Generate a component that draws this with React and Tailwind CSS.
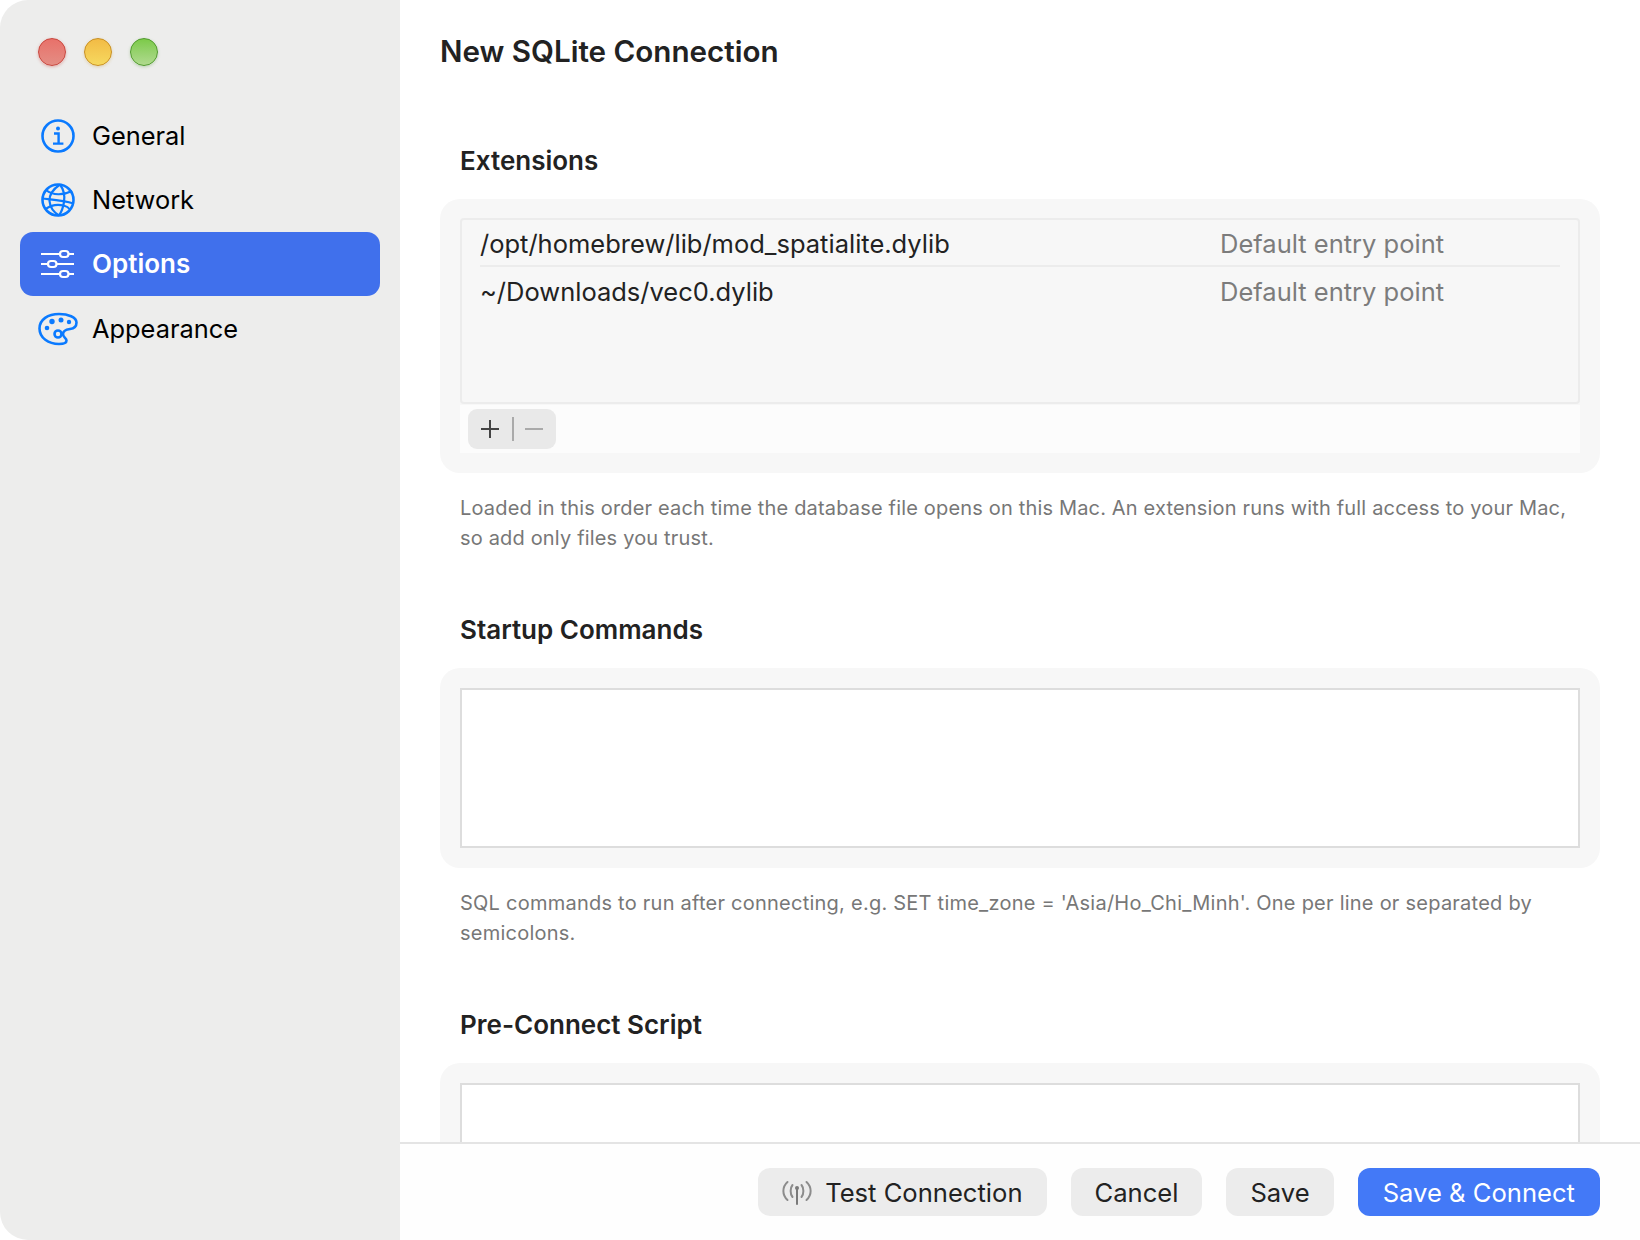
const InfoIcon = () => (
  <svg width="36" height="36" viewBox="0 0 36 36" fill="none" stroke="#0a7aff">
    <circle cx="18" cy="18" r="15.5" strokeWidth="2.6" />
    <circle cx="18" cy="10.600" r="2" fill="#0a7aff" stroke="none" />
    <path d="M14 15.500h4.600v10M13 25.600h10.400" strokeWidth="2.400" />
  </svg>
);

const GlobeIcon = () => (
  <svg width="36" height="36" viewBox="0 0 36 36" fill="none" stroke="#0a7aff" strokeWidth="2.200">
    <circle cx="18" cy="18" r="15.500" strokeWidth="2.600" />
    <path d="M20 2.500C12 8 9 13 9.500 19c.5 6 4 11 9.500 14.500" />
    <path d="M20 2.500C24 8 25 14 24 20c-.8 5-2.500 10-5 13.500" />
    <path d="M6 8c7 5.500 17 5.500 26 1" />
    <path d="M2.500 16.500c9 1 21 1.500 31 5" />
    <path d="M5.500 27c5-3.500 12-5 18-3.500c3 .7 5 1.800 6.500 4" />
  </svg>
);

const SlidersIcon = () => (
  <svg width="36" height="36" viewBox="0 0 36 36" fill="none" stroke="#fff" strokeWidth="2.200">
    <path d="M1 8h19M28.500 8h5.500M1 18h7M16.500 18h17.500M1 28h19M28.500 28h5.500" />
    <rect x="20" y="5" width="8.500" height="6" rx="3" />
    <rect x="8" y="15" width="8.500" height="6" rx="3" />
    <rect x="20" y="25" width="8.500" height="6" rx="3" />
  </svg>
);

const PaletteIcon = () => (
  <svg width="40" height="34" viewBox="0 0 40 34" fill="none" stroke="#0a7aff" strokeWidth="2.600">
    <path d="M21 2C10 2 1.500 7.500 1.500 16.500C1.500 26 10.500 32 21 32c4.500 0 7.500-1 7.500-3.500c0-2.500-3.500-3-3.500-6.500c0-3.500 3.500-4.500 7-5c4-.5 6.500-2.500 6.500-6.500C38.500 5 30 2 21 2Z" />
    <circle cx="20" cy="22" r="3.500" />
    <circle cx="9" cy="16" r="2.300" fill="#0a7aff" stroke="none" />
    <circle cx="14" cy="9.500" r="2.700" fill="#0a7aff" stroke="none" />
    <circle cx="23" cy="8" r="2.500" fill="#0a7aff" stroke="none" />
    <circle cx="31" cy="10" r="2.200" fill="#0a7aff" stroke="none" />
  </svg>
);

const AntennaIcon = () => (
  <svg width="30" height="26" viewBox="0 0 30 26" fill="none" stroke="#8c8c8c" strokeWidth="2" strokeLinecap="round">
    <path d="M15 9v15" stroke="#7a7a7a" />
    <circle cx="15" cy="8" r="2" fill="#7a7a7a" stroke="none" />
    <path d="M10.500 5c-2.500 3-2.500 9 0 12" />
    <path d="M19.500 5c2.500 3 2.500 9 0 12" />
    <path d="M5.500 2c-5.500 5-5.500 13 0 18" />
    <path d="M24.500 2c5.500 5 5.500 13 0 18" />
  </svg>
);

const navItems = [
  { label: "General", icon: <InfoIcon /> },
  { label: "Network", icon: <GlobeIcon /> },
  { label: "Options", icon: <SlidersIcon />, active: true },
  { label: "Appearance", icon: <PaletteIcon /> },
];

const Sidebar = () => (
  <aside className="w-[400px] shrink-0 bg-[#ededec] rounded-l-[28px]">
    {/* window buttons */}
    <div className="flex gap-[18px] pl-[38px] pt-[38px]">
      <span className="w-[28px] h-[28px] rounded-full border border-[#c9453c] bg-linear-to-b from-[#e8716a] to-[#e48d84] shadow-[0_1px_3px_rgba(200,60,50,0.35)]" />
      <span className="w-[28px] h-[28px] rounded-full border border-[#c98f1f] bg-linear-to-b from-[#f2bb45] to-[#f6d95f] shadow-[0_1px_3px_rgba(200,150,40,0.3)]" />
      <span className="w-[28px] h-[28px] rounded-full border border-[#4f9a2c] bg-linear-to-b from-[#7cca48] to-[#b0da8e] shadow-[0_1px_3px_rgba(80,150,50,0.3)]" />
    </div>
    <nav className="mt-[38px] px-[20px] flex flex-col">
      {navItems.map((item) => (
        <div
          key={item.label}
          className={`h-[64px] last:h-[66px] flex items-center rounded-[13px] ${item.active ? "bg-[#4070ec] text-white font-semibold" : "text-black"}`}
        >
          <span className="w-[72px] flex justify-center shrink-0 pl-[4px]">{item.icon}</span>
          <span className={`leading-none ${item.active ? "text-[26px]" : "text-[25.4px]"}`}>{item.label}</span>
        </div>
      ))}
    </nav>
  </aside>
);

const Heading = ({ children }) => (
  <h2 className="pl-[20px] h-[26px] mb-[26px] flex items-center text-[26px] font-semibold text-[#222]">{children}</h2>
);

const Description = ({ children, className = "tracking-[0.24px]" }) => (
  <p className={`mt-[20px] mb-[63px] px-[20px] text-[20px] leading-[30px] text-[#777] ${className}`}>{children}</p>
);

const Card = ({ children, className = "" }) => (
  <div className={`bg-[#f7f7f7] rounded-[20px] p-[20px] ${className}`}>{children}</div>
);

const ExtensionRow = ({ path, border }) => (
  <div className={`flex items-center text-[25.5px] ${border ? "h-[46px] pt-[2px] border-b-2 border-[#ececec]" : "h-[50px]"}`}>
    <span className="w-[740px] text-[#222]">{path}</span>
    <span className="text-[#7c7c7c]">Default entry point</span>
  </div>
);

const Button = ({ children, primary }) => (
  <button className={`h-[48px] pt-[2px] rounded-[12px] flex items-center text-[25.6px] ${primary ? "px-[25px] bg-[#4379f7] text-white" : "px-[24px] bg-[#ececec] text-[#222]"}`}>
    {children}
  </button>
);

export default function App() {
  return (
    <div className="w-[1640px] h-[1240px] flex bg-white font-['Inter',sans-serif]">
      <Sidebar />
      <main className="flex-1 min-w-0 h-full flex flex-col">
        <div className="flex-1 min-h-0 overflow-hidden px-[40px]">
          <h1 className="h-[102px] flex items-center text-[29.6px] font-semibold text-[#222]">New SQLite Connection</h1>

          <div className="mt-[45px]">
            <Heading>Extensions</Heading>
            <Card className="pt-[19px]">
              <div className="h-[186px] px-[18px] pt-[1px] bg-[#f7f7f7] border-2 border-[#ececec] rounded-[4px]">
                <ExtensionRow path="/opt/homebrew/lib/mod_spatialite.dylib" border />
                <ExtensionRow path="~/Downloads/vec0.dylib" />
              </div>
              <div className="h-[48px] mt-[1px] flex items-center pl-[8px] bg-[#fcfcfc]">
                <div className="w-[88px] h-[40px] flex items-center rounded-[9px] bg-[#e9e9e9]">
                  <svg width="88" height="40" viewBox="0 0 88 40" fill="none">
                    <path d="M22 11v18M13 20h18" stroke="#444" strokeWidth="2" />
                    <path d="M45 8v24" stroke="#aaa" strokeWidth="2" />
                    <path d="M57 20h18" stroke="#aaa" strokeWidth="2" />
                  </svg>
                </div>
              </div>
            </Card>
            <Description className="tracking-[0.17px]">
              Loaded in this order each time the database file opens on this Mac. An extension runs with full access to your Mac, so add only files you trust.
            </Description>
          </div>

          <Heading>Startup Commands</Heading>
          <Card>
            <div className="h-[160px] bg-white border-2 border-[#dddddd]" />
          </Card>
          <Description>
            SQL commands to run after connecting, e.g. SET time_zone = 'Asia/Ho_Chi_Minh'. One per line or separated by semicolons.
          </Description>

          <Heading>Pre-Connect Script</Heading>
          <Card>
            <div className="h-[160px] bg-white border-2 border-[#dddddd]" />
          </Card>
        </div>

        <footer className="h-[98px] shrink-0 border-t-2 border-[#e4e4e4] bg-[#fefefe] flex justify-end items-start pt-[24px] pr-[40px] gap-[24px]">
          <Button>
            <span className="mr-[13px]"><AntennaIcon /></span>
            Test Connection
          </Button>
          <Button>Cancel</Button>
          <Button>Save</Button>
          <Button primary>Save &amp; Connect</Button>
        </footer>
      </main>
    </div>
  );
}
